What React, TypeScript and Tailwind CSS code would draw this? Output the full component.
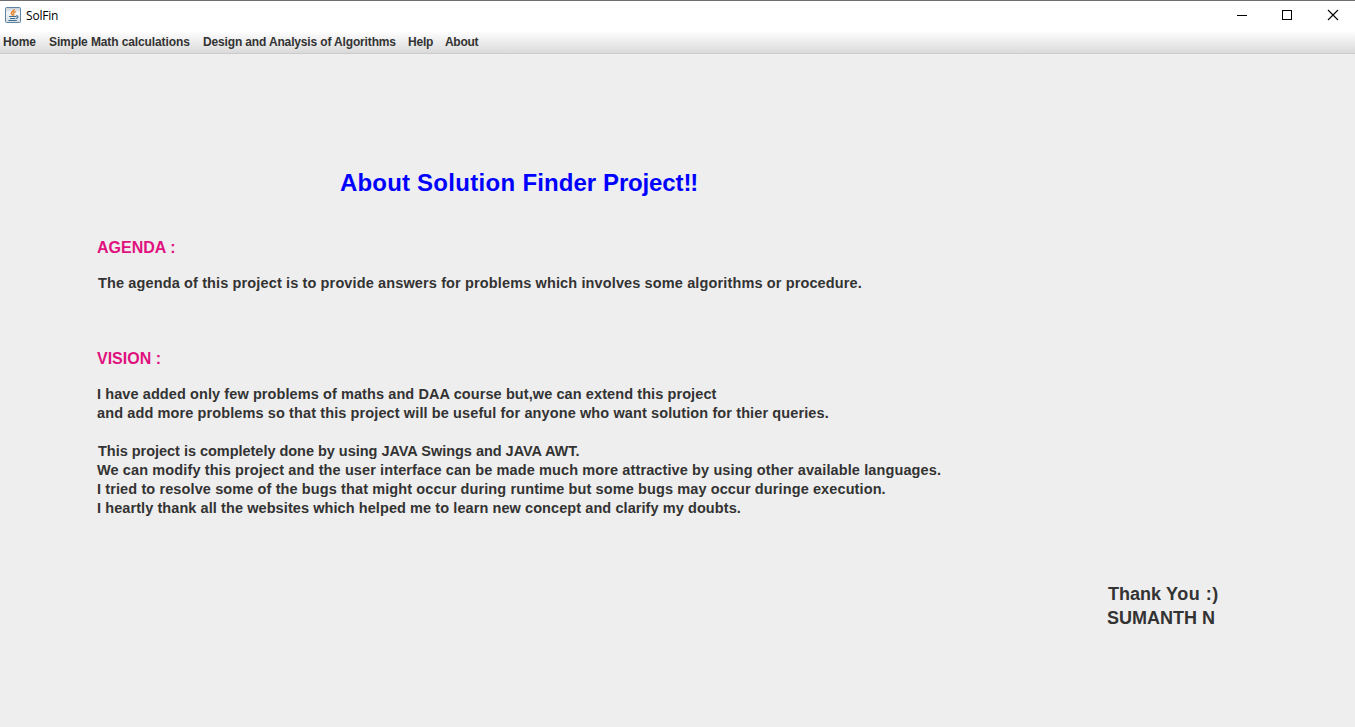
const menus = [
  { label: 'Home', style: 'ml-[3px] w-[46px] tracking-[-0.1px]' },
  { label: 'Simple Math calculations', style: 'w-[154px] tracking-[-0.11px]' },
  { label: 'Design and Analysis of Algorithms', style: 'w-[205px] tracking-[-0.15px]' },
  { label: 'Help', style: 'w-[37px] tracking-[-0.2px]' },
  { label: 'About', style: 'w-[40px] tracking-[-0.3px]' },
];

function JavaIcon() {
  return (
    <svg width="16" height="16" viewBox="0 0 16 16" fill="none">
      <defs>
        <linearGradient id="tile" x1="0" y1="0" x2="0" y2="1">
          <stop offset="0" stopColor="#c3ccd5" />
          <stop offset="0.35" stopColor="#f4f6f8" />
          <stop offset="1" stopColor="#d3dce3" />
        </linearGradient>
      </defs>
      <rect x="0.5" y="0.5" width="15" height="15" rx="1" fill="url(#tile)" stroke="#5f84a3" />
      <path d="M9.2 2.4C9.3 4 6 4.8 6.4 6.5C6.6 7.2 7.4 7.6 7.6 8.6" stroke="#e87d1e" strokeWidth="1.6" />
      <path d="M10.8 4.6C8.8 5.2 8.2 6 8.9 7C9.3 7.5 9 8 8.5 8.6" stroke="#e87d1e" strokeWidth="1.2" />
      <path d="M4 9.5H11M5 11.5H10.4M3.4 13.5H11.8" stroke="#3f6f92" strokeWidth="1.2" />
      <path d="M11 9C13.6 8.3 13.5 10.9 11 11.4" stroke="#3f6f92" strokeWidth="1.1" />
    </svg>
  );
}

function TitleBar() {
  return (
    <header className="flex h-[31px] items-start border-t border-[#6e6e6e] bg-white">
      <div className="flex flex-1 pt-1.5 pl-[5px]">
        <JavaIcon />
        <span className="ml-[5px] font-['Open_Sans',sans-serif] text-[12px] leading-[18px] tracking-[-0.2px] text-black">SolFin</span>
      </div>
      <svg width="118" height="30" viewBox="0 0 118 30" fill="none" stroke="black" shapeRendering="crispEdges">
        <path d="M0 14.5H10" />
        <rect x="45.5" y="9.5" width="9" height="9" />
        <path d="M91 9L101 19M101 9L91 19" shapeRendering="auto" strokeWidth="1.1" />
      </svg>
    </header>
  );
}

function MenuBar() {
  return (
    <nav className="flex h-[23px] border-b border-[#cccccc] bg-linear-to-b from-white to-[#dadada] text-[12px] leading-[22px] font-bold whitespace-nowrap">
      {menus.map((m) => (
        <span key={m.label} className={m.style}>{m.label}</span>
      ))}
    </nav>
  );
}

export default function App() {
  return (
    <div className="flex h-[727px] w-[1355px] flex-col overflow-hidden bg-[#eeeeee] font-['Liberation_Sans',Arial,sans-serif] text-[#333333]">
      <TitleBar />
      <MenuBar />
      <main className="flex flex-col pl-[97px] font-bold whitespace-nowrap">
        <h1 className="mt-[114px] ml-[243px] text-[24px] leading-[30px] font-bold text-[#0000ff]">
          <span className="tracking-[0.16px]">About </span>
          <span className="tracking-[0.32px]">Solution </span>
          <span className="tracking-[0.08px]">Finder </span>
          <span className="tracking-[-0.15px]">Project</span>
          <span className="tracking-[-1px]">!!</span>
        </h1>
        <h2 className="mt-10 text-[16px] leading-5 font-bold text-[#e0117f]">AGENDA :</h2>
        <p className="mt-4 ml-px text-[14.5px] leading-[19px] tracking-[0.13px]">
          The agenda of this project is to provide answers for problems which involves some algorithms or procedure.
        </p>
        <h2 className="mt-14 text-[16px] leading-5 font-bold text-[#e0117f]">VISION :</h2>
        <div className="mt-4 text-[14.5px] leading-[19px]">
          <p className="tracking-[0.09px]">I have added only few problems of maths and DAA course but,we can extend this project</p>
          <p className="tracking-[0.11px]">and add more problems so that this project will be useful for anyone who want solution for thier queries.</p>
          <p className="mt-[19px] ml-px tracking-[-0.025px]">This project is completely done by using JAVA Swings and JAVA AWT.</p>
          <p className="tracking-[0.115px]">We can modify this project and the user interface can be made much more attractive by using other available languages.</p>
          <p className="tracking-[0.11px]">I tried to resolve some of the bugs that might occur during runtime but some bugs may occur duringe execution.</p>
          <p className="tracking-[0.08px]">I heartly thank all the websites which helped me to learn new concept and clarify my doubts.</p>
        </div>
        <footer className="mt-[64px] ml-[1010px] text-[18px] leading-6">
          <p className="ml-px">
            <span>Thank </span>
            <span className="tracking-[0.5px]">You :)</span>
          </p>
          <p>SUMANTH N</p>
        </footer>
      </main>
    </div>
  );
}
